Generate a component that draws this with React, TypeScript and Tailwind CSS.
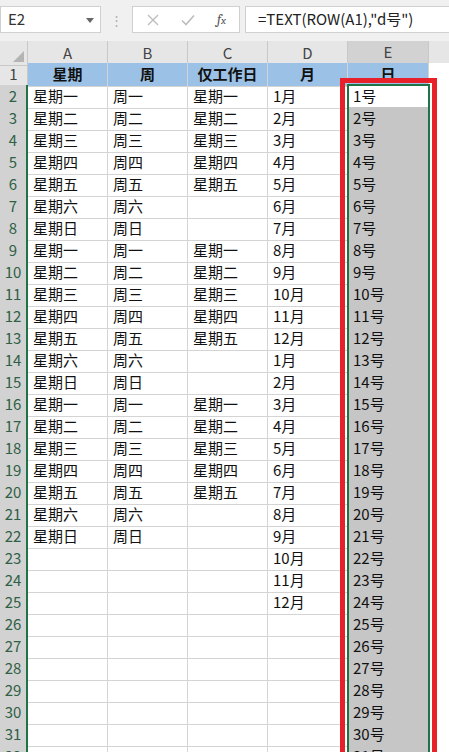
import React from "react";

const FONT = { fontFamily: '"Microsoft YaHei", "Noto Sans CJK SC", "Noto Sans", sans-serif' };

const WEEK = ["星期一", "星期二", "星期三", "星期四", "星期五", "星期六", "星期日"];
const ZHOU = ["周一", "周二", "周三", "周四", "周五", "周六", "周日"];

type Row = { a: string; b: string; c: string; d: string; e: string };

function buildRows(): Row[] {
  const rows: Row[] = [];
  for (let i = 0; i < 31; i++) {
    const inWeeks = i < 21;
    const w = i % 7;
    rows.push({
      a: inWeeks ? WEEK[w] : "",
      b: inWeeks ? ZHOU[w] : "",
      c: inWeeks && w < 5 ? WEEK[w] : "",
      d: i < 24 ? `${(i % 12) + 1}月` : "",
      e: `${i + 1}号`,
    });
  }
  return rows;
}

const COLS = "grid grid-cols-[28px_80px_80px_80px_80px_81px_1fr]";

function TopBar() {
  return (
    <div className="flex h-[41px] items-start gap-0 bg-[#f0f0f0] pt-[6px]">
      <div className="relative flex h-[27px] w-[101px] items-center border border-[#d0d0d0] bg-white pl-[7px] text-[15px] text-[#333]">
        E2
        <span className="absolute right-[6px] top-[11px] h-0 w-0 border-x-[4px] border-t-[5px] border-x-transparent border-t-[#666]" />
      </div>
      <div className="flex h-[27px] w-[31px] items-center justify-center text-[13px] text-[#b0b0b0]">⋮</div>
      <div className="flex h-[27px] w-[108px] items-center border border-[#d0d0d0] bg-white text-[#b8b8b8]">
        <svg className="ml-[14px]" width="12" height="12" viewBox="0 0 12 12">
          <path d="M1 1L11 11M11 1L1 11" stroke="#bdbdbd" strokeWidth="1.4" />
        </svg>
        <svg className="ml-[22px]" width="14" height="12" viewBox="0 0 14 12">
          <path d="M1 6.5L5 10.5L13 1.5" fill="none" stroke="#bdbdbd" strokeWidth="1.6" />
        </svg>
        <span className="ml-[22px] font-serif text-[14px] italic text-[#555]">
          f<span className="text-[11px]">x</span>
        </span>
      </div>
      <div className="ml-[5px] flex h-[27px] flex-1 items-center border border-[#d0d0d0] border-r-0 bg-white pl-[12px] text-[15px] text-[#222]">
        =TEXT(ROW(A1),"d号")
      </div>
    </div>
  );
}

function ColumnHeader() {
  const letters = ["A", "B", "C", "D", "E"];
  return (
    <div className={`${COLS} h-[22px] text-[15px] text-[#444]`}>
      <div className="relative border-b border-r border-[#c8c8c8] bg-[#e6e6e6]">
        <span className="absolute bottom-[3px] right-[3px] h-0 w-0 border-b-[11px] border-l-[11px] border-b-[#b4b4b4] border-l-transparent" />
      </div>
      {letters.map((l) =>
        l === "E" ? (
          <div key={l} className="flex items-center justify-center border-b-2 border-r border-b-[#217346] border-r-[#c8c8c8] bg-[#d2d2d2]">
            {l}
          </div>
        ) : (
          <div key={l} className="flex items-center justify-center border-b border-r border-[#c8c8c8] bg-[#e6e6e6]">
            {l}
          </div>
        ),
      )}
      <div className="border-b border-[#c8c8c8] bg-[#e6e6e6]" />
    </div>
  );
}

function HeaderRow() {
  const titles = ["星期", "周", "仅工作日", "月", "日"];
  return (
    <div className={`${COLS} h-[22px] text-[15px]`}>
      <div className="flex items-center justify-center border-b border-r border-[#c8c8c8] bg-[#e6e6e6] text-[#444]">1</div>
      {titles.map((t) => (
        <div key={t} className="flex items-center justify-center border-b border-r border-[#d4d4d4] bg-[#9bc2e6] font-bold text-[#111]">
          {t}
        </div>
      ))}
      <div className="border-b border-[#d4d4d4] bg-white" />
    </div>
  );
}

function DataRow({ n, row }: { n: number; row: Row }) {
  const cell = "flex items-center border-b border-r border-[#d4d4d4] pl-[5px] text-[#111]";
  return (
    <div className={`${COLS} h-[22px] text-[15px]`}>
      <div className="flex items-center justify-center border-b border-r-2 border-b-[#bdbdbd] border-r-[#217346] bg-[#d2d2d2] text-[#2f5f45]">
        {n}
      </div>
      <div className={cell}>{row.a}</div>
      <div className={cell}>{row.b}</div>
      <div className={cell}>{row.c}</div>
      <div className={cell}>{row.d}</div>
      <div className={`${cell} ${n === 2 ? "bg-white" : "bg-[#c6c6c6] border-b-[#ababab]"}`}>{row.e}</div>
      <div className="border-b border-[#d4d4d4] bg-white" />
    </div>
  );
}

export default function App() {
  const rows = buildRows();
  return (
    <div className="relative h-[752px] w-[449px] overflow-hidden bg-white" style={FONT}>
      <TopBar />
      <ColumnHeader />
      <HeaderRow />
      {rows.map((r, i) => (
        <DataRow key={i} n={i + 2} row={r} />
      ))}
      {/* selection outline on E2:E32 */}
      <div className="pointer-events-none absolute left-[347px] top-[84px] h-[720px] w-[83px] border-2 border-[#217346]" />
      {/* red annotation box */}
      <div className="pointer-events-none absolute left-[340px] top-[78px] h-[720px] w-[97px] border-[5px] border-[#e8202a]" />
    </div>
  );
}
